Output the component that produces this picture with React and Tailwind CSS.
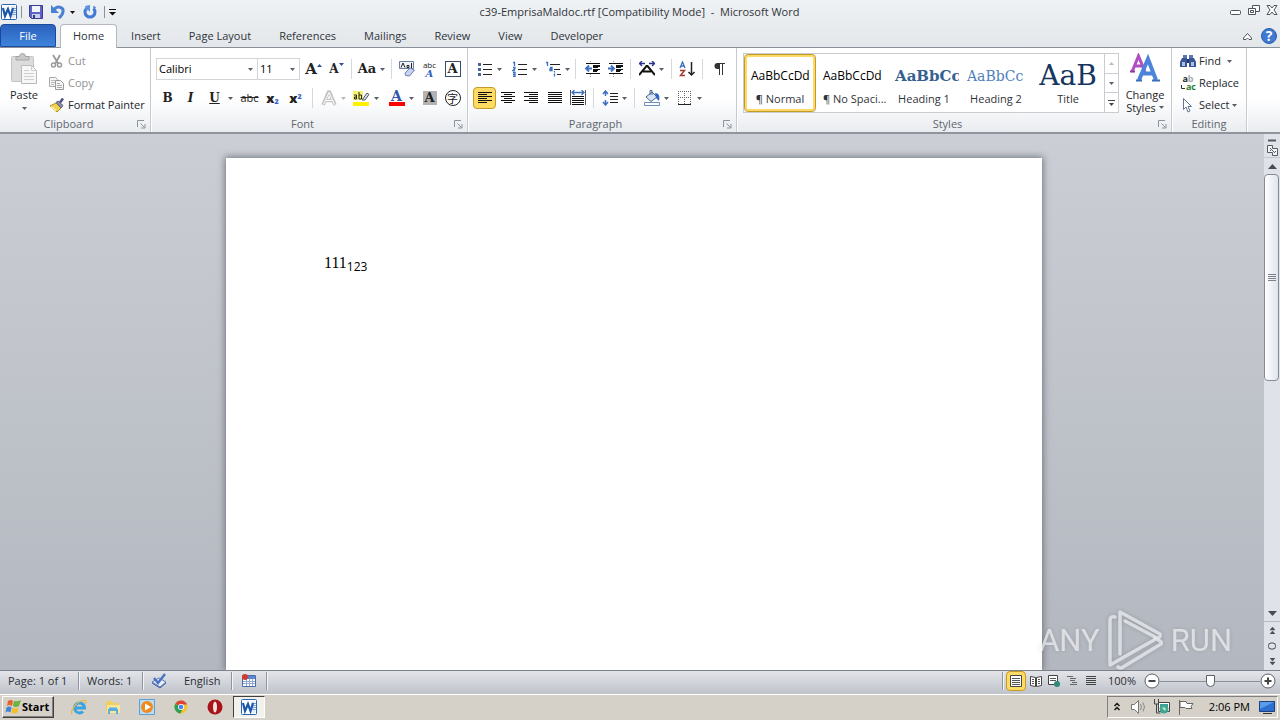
import React, { useState } from 'react'
import clsx from 'clsx'

const TABS = ['Home', 'Insert', 'Page Layout', 'References', 'Mailings', 'Review', 'View', 'Developer']

const STYLES = [
    { name: '¶ Normal', sample: 'AaBbCcDd', look: 'font-["Open_Sans",sans-serif] text-xs text-black' },
    { name: '¶ No Spaci...', sample: 'AaBbCcDd', look: 'font-["Open_Sans",sans-serif] text-xs text-black' },
    { name: 'Heading 1', sample: 'AaBbCc', look: 'font-["DejaVu_Serif",serif] text-[15px] font-bold text-[#365f91]' },
    { name: 'Heading 2', sample: 'AaBbCc', look: 'font-["DejaVu_Serif",serif] text-[14px] text-[#4f81bd]' },
    { name: 'Title', sample: 'AaB', look: 'justify-center font-["DejaVu_Serif",serif] text-[28px] text-[#17365d]' },
]

const Svg = ({ w = 16, h = 16, className, children }) => (
    <svg width={w} height={h} viewBox={`0 0 ${w} ${h}`} fill="none" aria-hidden="true" className={clsx('shrink-0', className)}>
        {children}
    </svg>
)

const Caret = ({ light }) => (
    <Svg w={5} h={3}><path d="M0 0h5L2.500 3z" fill={light ? '#b5b9be' : '#5b6068'} /></Svg>
)

const Tool = ({ label, width = 'w-[23px]', active, caret, light, children }) => (
    <button
        type="button"
        aria-label={label}
        aria-pressed={active}
        className={clsx(
            'flex h-[22px] shrink-0 items-center justify-center rounded-sm border',
            width,
            caret ? 'gap-1' : '',
            active ? 'border-[#c29b29] bg-[#fedb62]' : 'border-transparent hover:border-[#f1c43f] hover:bg-[#fdeeb3]'
        )}
    >
        {children}
        {caret && <Caret light={light} />}
    </button>
)

const Divider = ({ className = 'mx-[3px]' }) => <span className={clsx('h-5 w-px shrink-0 bg-[#d5d8dc]', className)} />

const QuickDivider = ({ className }) => <span className={clsx('h-3 w-px shrink-0 bg-[#8d9299]', className)} />

const Group = ({ name, launcher = true, width, children }) => (
    <section aria-label={name} className={clsx('flex shrink-0 flex-col border-r border-[#c6cad0] shadow-[1px_0_0_#fff]', width)}>
        <div className="flex flex-1 px-1">{children}</div>
        <div className="flex h-4 items-center text-[#60666f]">
            <span className="flex-1 text-center">{name}</span>
            {launcher && (
                <button type="button" aria-label={`${name} options`} className="mr-1 flex">
                    <Svg w={9} h={9}>
                        <path d="M.5 7V.5H7M3.500 3.500l4 4M8 4v4H4" stroke="#8d939b" />
                    </Svg>
                </button>
            )}
        </div>
    </section>
)

/* ---------- icons ---------- */

const WordIcon = () => (
    <Svg>
        <rect x=".5" y=".5" width="15" height="15" rx="1" fill="#fff" stroke="#2a62b4" />
        <path d="M10 2h4v12h-4z" fill="#dfe9f7" />
        <path d="M11 4.500h4M11 6.500h4M11 8.500h4M11 10.500h4" stroke="#7ea3d6" />
        <path d="M2 4l2 8L7 5l2.500 7L12 4" stroke="#1c56ab" strokeWidth="2.200" />
    </Svg>
)

const SaveIcon = () => (
    <Svg>
        <path d="M1.500 1.500h13v13h-11l-2-2z" fill="#5f63c4" stroke="#3b3d93" />
        <path d="M4 2h8v6H4z" fill="#f3f5fd" />
        <path d="M4 10h8v4H4z" fill="#c9cdee" />
        <path d="M5 11h2v3H5z" fill="#35378a" />
    </Svg>
)

const UndoIcon = () => (
    <Svg>
        <path d="M4 6c3-5 10-3 9 2-.4 3-2 4-4 6" stroke="#4a80d4" strokeWidth="3" />
        <path d="M1 1v8h8z" fill="#4a80d4" />
    </Svg>
)

const RedoIcon = () => (
    <Svg>
        <path d="M4.500 4.500a5 5 0 1 0 7 0" stroke="#3f7ad6" strokeWidth="3" />
        <path d="M8 1v7l-2-2-2 1-1-5z" fill="#5c92e2" />
        <path d="M11 2l3 1-2 3z" fill="#3f7ad6" />
    </Svg>
)

const PasteIcon = () => (
    <Svg w={28} h={32}>
        <rect x="1.500" y="3.500" width="22" height="25" rx="1" fill="#dcdcdc" stroke="#c3c3c3" />
        <path d="M6 7V3.500h3.500a3 3 0 0 1 6 0H19V7z" fill="#c9c9c9" stroke="#a5a5a5" />
        <path d="M11.500 12.500h10l5 5v13h-15z" fill="#f7f7f7" stroke="#b9b9b9" />
        <path d="M21.500 12.500v5h5M14 17.500h5M14 20.500h10M14 23.500h10M14 26.500h10" stroke="#cfcfcf" />
    </Svg>
)

const CutIcon = () => (
    <Svg>
        <path d="M4 2l5.500 9M11 2L6 11" stroke="#9a9a9a" strokeWidth="1.800" />
        <circle cx="4.500" cy="12" r="2" stroke="#9a9a9a" strokeWidth="1.500" />
        <circle cx="10.500" cy="12" r="2" stroke="#9a9a9a" strokeWidth="1.500" />
    </Svg>
)

const CopyIcon = () => (
    <Svg>
        <path d="M.5 2.500h6l2 2v7h-8z" fill="#f5f5f5" stroke="#a9a9a9" />
        <path d="M2 5.500h4M2 7.500h4M2 9.500h3" stroke="#bbb" />
        <path d="M6.500 5.500h5l3 3v6h-8z" fill="#f5f5f5" stroke="#999" />
        <path d="M8 8.500h3M8 10.500h5M8 12.500h5" stroke="#aaa" />
    </Svg>
)

const PainterIcon = () => (
    <Svg>
        <path d="M1 9l6-3 5 5-4 4z" fill="#f3d24b" stroke="#b18f1d" />
        <path d="M2 9.500l5 4" stroke="#fff2a8" strokeWidth="1.500" />
        <path d="M7 5.500L9 4l5 4.500-2 2.500z" fill="#8a8ea6" stroke="#5d6077" />
        <path d="M11 5.500L14 1.500" stroke="#4d4f86" strokeWidth="2.500" />
    </Svg>
)

const ALIGN_PATHS = {
    left: 'M1 2.500h14M1 4.500h9M1 6.500h14M1 8.500h9M1 10.500h14M1 12.500h9',
    center: 'M1 2.500h14M4 4.500h8M1 6.500h14M4 8.500h8M1 10.500h14M4 12.500h8',
    right: 'M1 2.500h14M6 4.500h9M1 6.500h14M6 8.500h9M1 10.500h14M6 12.500h9',
    full: 'M1 2.500h14M1 4.500h14M1 6.500h14M1 8.500h14M1 10.500h14M1 12.500h14',
}

const AlignIcon = ({ kind }) => <Svg><path d={ALIGN_PATHS[kind]} stroke="#111" /></Svg>

const DistributeIcon = () => (
    <Svg>
        <path d="M.5 0v15M15.500 0v15" stroke="#555" />
        <path d="M2 2.500h12M4.500 0L2 2.500 4.500 5M11.500 0L14 2.500 11.500 5" stroke="#3c6fc0" strokeWidth="1.300" />
        <path d="M2 6.500h12M2 8.500h12M2 10.500h12M2 12.500h12M2 14.500h12" stroke="#111" />
    </Svg>
)

const BulletsIcon = () => (
    <Svg>
        <path d="M1 2h3v3H1zM1 7h3v3H1zM1 12h3v3H1z" fill="#4a6595" />
        <path d="M6 3.500h9M6 8.500h9M6 13.500h9" stroke="#222" />
    </Svg>
)

const NumberingIcon = () => (
    <Svg>
        <path d="M1 1.500h1.500V5M1 6.500h2v1l-2 2h2M1 11.500h2v4H1M1 13.500h2" stroke="#3c6fc0" strokeWidth="1.300" />
        <path d="M6 3.500h9M6 8.500h9M6 13.500h9" stroke="#222" />
    </Svg>
)

const MultilevelIcon = () => (
    <Svg>
        <path d="M1 1.500h1.500V5M5 6.500h2v3H5v-1.500h2M9.500 10v1.500M9.500 12.500v3" stroke="#3c6fc0" strokeWidth="1.300" />
        <path d="M5 3.500h10M9 8.500h6M12 13.500h4" stroke="#222" />
    </Svg>
)

const IndentIcon = ({ out }) => (
    <Svg>
        <path d="M1 2.500h14M8 4.500h7M8 6.500h5M8 8.500h7M8 10.500h4M1 12.500h14" stroke="#111" />
        <path d="M8 5.500h7M8 9.500h5" stroke="#111" />
        <path d={out ? 'M7 7.500H1M4 4.500l-3 3 3 3' : 'M0 7.500h6M3 4.500l3 3-3 3'} stroke="#3c6fc0" strokeWidth="1.800" />
        <path d="M5.500 0v2M5.500 13v3" stroke="#999" strokeDasharray="1 1" />
    </Svg>
)

const ScaleIcon = () => (
    <Svg>
        <path d="M0 14L7.500 5h1L16 14M4 10.500h8" stroke="#111" strokeWidth="2" />
        <path d="M0 2.500h6M10 2.500h6M3 0L.5 2.500 3 5M13 0l2.500 2.500L13 5" stroke="#2b2f8e" strokeWidth="1.300" />
    </Svg>
)

const SortIcon = () => (
    <Svg>
        <path d="M1 7l2.500-6L6 7M2 5h3" stroke="#3c6fc0" strokeWidth="1.300" />
        <path d="M1 9.500h4.500l-4 5H6" stroke="#a63a2b" strokeWidth="1.500" />
        <path d="M12.500 1v13M9.500 11l3 3 3-3" stroke="#222" strokeWidth="1.500" />
    </Svg>
)

const PilcrowIcon = () => (
    <Svg>
        <path d="M6 2.500h8M8.500 2v12M11.500 2v12" stroke="#333" />
        <path d="M8.500 2H6.500a3 3 0 0 0 0 6h2z" fill="#333" />
    </Svg>
)

const SpacingIcon = () => (
    <Svg>
        <path d="M3.500 1v5M3.500 10v5M1 4l2.500-3L6 4M1 12l2.500 3L6 12" stroke="#3c6fc0" strokeWidth="1.500" />
        <path d="M8 3.500h8M8 6.500h8M8 9.500h8M8 12.500h8" stroke="#222" />
    </Svg>
)

const BucketIcon = () => (
    <Svg>
        <path d="M2 7l6-5 5 5-6 4.500z" fill="#d9e5f5" stroke="#48688f" />
        <path d="M6 5V.5h2V5" stroke="#48688f" />
        <path d="M11 3c4 0 5 3 4 8l-3-3z" fill="#2f66c4" />
        <path d="M.5 12.500h15v3H.5z" fill="#fff" stroke="#6c8bb5" />
    </Svg>
)

const BorderIcon = () => (
    <Svg>
        <path d="M1.500 1v13M7.500 1v13M13.500 1v13M1 1.500h13M1 7.500h13" stroke="#666" strokeDasharray="1 1" />
        <path d="M1 14.500h13" stroke="#222" />
    </Svg>
)

const EraserIcon = () => (
    <Svg>
        <path d="M.5.5h14v7H.5z" fill="#eef3fb" stroke="#6a7f9e" />
        <path d="M2 6.500L4 2l2 4.500M8 6.500V4.500h2v2H8M12.500 2v5" stroke="#222" />
        <path d="M6 12l5-5 4.500 2-5 6-4-.5z" fill="#c7d3ee" stroke="#6b7fb5" />
    </Svg>
)

const HighlightIcon = () => (
    <Svg w={17}>
        <path d="M0 1h10v9H0z" fill="#f7f36a" />
        <path d="M1 5h2.500v4H1.500V7h2M6 2v7h2.500V5H6" stroke="#222" />
        <path d="M9 10l5-7 2 1.500-4 5.500z" fill="#d6dbe4" stroke="#4e5a70" />
        <path d="M0 12h16v4H0z" fill="#ffef00" />
    </Svg>
)

const ChangeStylesIcon = () => (
    <Svg w={30} h={30}>
        <path d="M2 19L8.500 3 15 19M4.500 13h8" stroke="#b04fc0" strokeWidth="3" />
        <path d="M0 18.500h5" stroke="#8d3aa0" strokeWidth="2" />
        <path d="M9 27L18 6l8 21M11.500 20.500h12" stroke="#4b84d8" strokeWidth="4" />
        <path d="M6 27.500h6M22 27.500h8" stroke="#3a6cbd" strokeWidth="2" />
    </Svg>
)

const FindIcon = () => (
    <Svg>
        <path d="M3 2h4v3H3zM9 2h4v3H9z" fill="#5b78b4" />
        <path d="M2 5h5v9H0V9zM9 5h5l2 4v5H9z" fill="#3a5596" />
        <path d="M7 6h2v4H7z" fill="#20386f" />
        <path d="M2 9h3v4H2zM11 9h3v4h-3z" fill="#a9bfe6" />
    </Svg>
)

const ReplaceIcon = () => (
    <span className="flex w-4 shrink-0 flex-col text-[9px] leading-[8px] font-bold">
        <span>a<span className="text-[#aaa]">b</span></span>
        <span className="flex items-center justify-end text-[#2d7d32]">
            <Svg w={5} h={5}><path d="M.5 0v3.500H4" stroke="#333" /></Svg>
            ac
        </span>
    </span>
)

const SelectIcon = () => (
    <Svg>
        <path d="M3.500 1.500v11l2.500-2.500 2 5 2-1-2-4.500h3.500z" fill="#fff" stroke="#64748f" />
    </Svg>
)

const EditRow = ({ icon, muted, caret, children }) => (
    <button type="button" className={clsx('flex h-[22px] items-center gap-[3px] whitespace-nowrap', muted ? 'text-[#929292]' : 'text-[#23272c]')}>
        {icon}
        {children}
        {caret && <Caret />}
    </button>
)

const Combo = ({ label, value, width }) => {
    const [text, setText] = useState(value)
    return (
        <div className={clsx('flex h-[22px] items-center border border-[#d2d5d9] bg-white pr-1', width)}>
            <input
                aria-label={label}
                value={text}
                onChange={(e) => setText(e.target.value)}
                className="min-w-0 flex-1 pl-0.5 text-black outline-none"
            />
            <button type="button" aria-label={`${label} list`} className="flex"><Caret /></button>
        </div>
    )
}

/* ---------- window parts ---------- */

const TitleBar = () => (
    <header className="flex h-6 shrink-0 items-center pr-0.5 pl-px">
        <div className="flex flex-1 items-center">
            <button type="button" aria-label="Word" className="flex"><WordIcon /></button>
            <QuickDivider className="mx-1" />
            <button type="button" aria-label="Save" className="ml-0.5 flex"><SaveIcon /></button>
            <button type="button" aria-label="Undo" className="ml-1.5 flex items-center gap-1">
                <UndoIcon />
                <Svg w={5} h={3}><path d="M0 0h5L2.500 3z" fill="#111" /></Svg>
            </button>
            <button type="button" aria-label="Repeat" className="ml-[7px] flex"><RedoIcon /></button>
            <QuickDivider className="mr-1 ml-1.5" />
            <button type="button" aria-label="Customize toolbar" className="flex">
                <Svg w={7} h={7}><path d="M0 .5h7" stroke="#111" /><path d="M0 3h7L3.500 6.500z" fill="#111" /></Svg>
            </button>
        </div>
        <h1 className="whitespace-pre text-[#2f343a]">c39-EmprisaMaldoc.rtf [Compatibility Mode]  -  Microsoft Word</h1>
        <div className="flex flex-1 items-center justify-end gap-1.5 pb-1">
            <button type="button" aria-label="Minimize">
                <Svg w={12} h={12}><rect x=".5" y="6.500" width="10" height="4" rx="1" fill="#fff" stroke="#4f555d" /></Svg>
            </button>
            <button type="button" aria-label="Restore">
                <Svg w={12} h={12}>
                    <path d="M4.500 1.500h7v6h-7z" fill="#fff" stroke="#4f555d" />
                    <path d="M.5 4.500h7v6h-7z" fill="#fff" stroke="#4f555d" />
                    <path d="M2.500 6.500h3v2h-3z" stroke="#4f555d" />
                </Svg>
            </button>
            <button type="button" aria-label="Close">
                <Svg w={12} h={12}>
                    <path d="M1 1.500h3l2 2.500 2-2.500h3L8 6l3 4.500H8L6 8l-2 2.500H1L4 6z" fill="#fff" stroke="#4f555d" />
                </Svg>
            </button>
        </div>
    </header>
)

const TabBar = () => {
    const [tab, setTab] = useState('Home')
    return (
        <nav className="flex h-6 shrink-0 items-stretch border-b border-[#8a9098] pr-[3px]">
            <button type="button" className="mr-1 w-14 rounded-t border border-[#1b4a9c] bg-linear-to-b from-[#2c62bd] to-[#3e83da] text-white">File</button>
            {TABS.map((name) => (
                <button
                    key={name}
                    type="button"
                    onClick={() => setTab(name)}
                    className={clsx(
                        'mb-[-1px] rounded-t border border-b-0 pb-0.5 whitespace-nowrap text-[#2f343a]',
                        tab === name ? 'border-[#b4b9c0] bg-white px-3' : 'border-transparent px-[13px]'
                    )}
                >
                    {name}
                </button>
            ))}
            <div className="flex flex-1 items-center justify-end gap-2">
                <button type="button" aria-label="Minimize ribbon">
                    <Svg w={11} h={10}><path d="M1.500 7L5.500 2.500 9.500 7v1.500H7L5.500 7 4 8.500H1.500z" fill="#fff" stroke="#4f555d" /></Svg>
                </button>
                <button type="button" aria-label="Help" className="flex size-4 items-center justify-center rounded-full border border-[#2a5db0] bg-[#3f7ad0] text-sm font-bold text-white">?</button>
            </div>
        </nav>
    )
}

const FontGroup = () => (
    <Group name="Font" width="w-[317px]">
        <div className="flex flex-col gap-[7px] pt-2.5 pl-px font-['DejaVu_Serif',serif] text-[#222]">
            <div className="flex items-center">
                <div className="flex font-['Open_Sans',sans-serif]">
                    <Combo label="Font name" value="Calibri" width="w-[102px]" />
                    <Combo label="Font size" value="11" width="-ml-px w-[43px]" />
                </div>
                <Tool label="Grow font" width="ml-0.5 w-[23px]">
                    <b className="text-[15px]">A</b>
                    <Svg w={5} h={10}><path d="M0 3h5L2.500 0z" fill="#2f4f96" /></Svg>
                </Tool>
                <Tool label="Shrink font">
                    <b className="text-xs">A</b>
                    <Svg w={5} h={12}><path d="M0 0h5L2.500 3z" fill="#2f4f96" /></Svg>
                </Tool>
                <Divider />
                <Tool label="Change case" width="w-[33px]" caret><b className="text-[13px]">Aa</b></Tool>
                <Divider />
                <Tool label="Clear formatting"><EraserIcon /></Tool>
                <Tool label="Phonetic guide">
                    <span className="flex flex-col items-center text-[8px] leading-[9px] font-bold">
                        <span className="font-['Open_Sans',sans-serif] font-normal">abc</span>
                        <i className="text-[10px] text-[#2f5fc0]">A</i>
                    </span>
                </Tool>
                <Tool label="Character border">
                    <b className="flex size-4 items-center justify-center border border-[#3b4c66] text-[13px]">A</b>
                </Tool>
            </div>
            <div className="flex items-center">
                <Tool label="Bold"><b className="text-xs">B</b></Tool>
                <Tool label="Italic"><b className="text-xs italic">I</b></Tool>
                <Tool label="Underline" width="w-[36px]" caret><b className="pr-1 pl-0.5 text-xs underline">U</b></Tool>
                <Tool label="Strikethrough"><span className="font-['Open_Sans',sans-serif] text-[11px] line-through">abc</span></Tool>
                <Tool label="Subscript">
                    <span className="font-['Open_Sans',sans-serif] text-[13px] leading-none font-extrabold">x<sub className="text-[7px] text-[#2f5fc0]">2</sub></span>
                </Tool>
                <Tool label="Superscript">
                    <span className="font-['Open_Sans',sans-serif] text-[13px] leading-none font-extrabold">x<sup className="text-[7px] text-[#2f5fc0]">2</sup></span>
                </Tool>
                <Divider className="mx-[5px]" />
                <Tool label="Text effects" width="w-[30px]" caret light>
                    <Svg><path d="M2 15L7.500 2h1L14 15M4.500 10.500h7" stroke="#c4c4c4" strokeWidth="3.500" /><path d="M2.500 14.500L8 2.500l5.500 12M5 10.500h6" stroke="#fff" /></Svg>
                </Tool>
                <Tool label="Highlight" width="w-[36px]" caret><HighlightIcon /></Tool>
                <Tool label="Font color" width="w-[34px]" caret>
                    <span className="flex w-4 flex-col items-center border-b-4 border-[#f00] text-[14px] leading-[12px] font-bold text-[#3458a4]">A</span>
                </Tool>
                <Tool label="Character shading">
                    <b className="flex h-3.5 w-3.5 items-center justify-center bg-[#b3b3b3] text-[13px]">A</b>
                </Tool>
                <Tool label="Enclose characters">
                    <span className="flex size-4 items-center justify-center rounded-full border border-[#222] font-['Noto_Sans_CJK_SC',sans-serif] text-[11px] leading-none">字</span>
                </Tool>
            </div>
        </div>
    </Group>
)

const ParagraphGroup = () => (
    <Group name="Paragraph" width="w-[269px]">
        <div className="flex flex-col gap-[7px] pt-2.5">
            <div className="flex items-center">
                <Tool label="Bullets" width="w-[35px]" caret><BulletsIcon /></Tool>
                <Tool label="Numbering" width="w-[35px]" caret><NumberingIcon /></Tool>
                <Tool label="Multilevel list" width="w-[30px]" caret><MultilevelIcon /></Tool>
                <Divider className="mr-[5px] ml-[3px]" />
                <Tool label="Decrease indent"><IndentIcon out /></Tool>
                <Tool label="Increase indent"><IndentIcon /></Tool>
                <Divider />
                <Tool label="Asian layout" width="w-[34px]" caret><ScaleIcon /></Tool>
                <Divider />
                <Tool label="Sort"><SortIcon /></Tool>
                <Divider className="mx-1" />
                <Tool label="Show marks"><PilcrowIcon /></Tool>
            </div>
            <div className="flex items-center">
                <Tool label="Align left" width="ml-px w-[23px]" active><AlignIcon kind="left" /></Tool>
                <Tool label="Center"><AlignIcon kind="center" /></Tool>
                <Tool label="Align right" width="w-6"><AlignIcon kind="right" /></Tool>
                <Tool label="Justify"><AlignIcon kind="full" /></Tool>
                <Tool label="Distribute" width="w-6"><DistributeIcon /></Tool>
                <Divider />
                <Tool label="Line spacing" width="w-[34px]" caret><SpacingIcon /></Tool>
                <Divider className="mr-1 ml-[3px]" />
                <Tool label="Shading" width="w-[34px]" caret><BucketIcon /></Tool>
                <Tool label="Borders" width="w-[33px]" caret><BorderIcon /></Tool>
            </div>
        </div>
    </Group>
)

const StylesGroup = () => {
    const [current, setCurrent] = useState('¶ Normal')
    return (
        <Group name="Styles" width="w-[435px]">
            <div className="ml-0.5 flex pt-[5px]">
                <div className="flex h-[60px] border border-[#c9cdd2] bg-white">
                    {STYLES.map((s) => (
                        <button
                            key={s.name}
                            type="button"
                            onClick={() => setCurrent(s.name)}
                            className={clsx(
                                'flex h-[58px] w-[72px] flex-col justify-end overflow-hidden rounded-sm border px-1.5 pb-1 text-[#2f343a]',
                                current === s.name ? 'border-[#c29b29] shadow-[inset_0_0_0_2px_#ffd966]' : 'border-transparent'
                            )}
                        >
                            <span className={clsx('flex h-7 w-full items-center leading-none', s.look)}>{s.sample}</span>
                            <span className="w-full text-center leading-[17px] whitespace-nowrap">{s.name}</span>
                        </button>
                    ))}
                    <div className="flex w-3.5 flex-col divide-y divide-[#c9cdd2] border-l border-[#c9cdd2]">
                        <button type="button" aria-label="Previous styles" className="flex flex-1 items-center justify-center">
                            <Svg w={5} h={3}><path d="M0 3h5L2.500 0z" fill="#b5b9be" /></Svg>
                        </button>
                        <button type="button" aria-label="Next styles" className="flex flex-1 items-center justify-center"><Caret /></button>
                        <button type="button" aria-label="More styles" className="flex flex-1 items-center justify-center">
                            <Svg w={7} h={6}><path d="M0 .5h7" stroke="#444" /><path d="M1 3h5L3.500 6z" fill="#444" /></Svg>
                        </button>
                    </div>
                </div>
                <button type="button" className="ml-0.5 flex w-12 flex-col items-center text-[#23272c]">
                    <ChangeStylesIcon />
                    <span className="mt-[5px] leading-[13px]">Change</span>
                    <span className="flex items-center gap-[3px] leading-[13px]">Styles <Caret /></span>
                </button>
            </div>
        </Group>
    )
}

const Ribbon = () => (
    <div className="flex h-[86px] shrink-0 border-b-2 border-[#8f949d] bg-linear-to-b from-white from-60% to-[#e9ecf0]">
        <Group name="Clipboard" width="w-[151px]">
            <button type="button" className="flex w-10 flex-col items-center pt-[5px] text-[#23272c]">
                <PasteIcon />
                <span className="pt-0.5 leading-4">Paste</span>
                <span className="pt-1"><Caret /></span>
            </button>
            <div className="flex flex-col pt-0.5 pl-[5px]">
                <EditRow icon={<CutIcon />} muted>Cut</EditRow>
                <EditRow icon={<CopyIcon />} muted>Copy</EditRow>
                <EditRow icon={<PainterIcon />}>Format Painter</EditRow>
            </div>
        </Group>
        <FontGroup />
        <ParagraphGroup />
        <StylesGroup />
        <Group name="Editing" launcher={false} width="w-[75px]">
            <div className="flex flex-col pt-0.5 pl-1">
                <EditRow icon={<FindIcon />} caret>Find&nbsp;</EditRow>
                <EditRow icon={<ReplaceIcon />}>Replace</EditRow>
                <EditRow icon={<SelectIcon />} caret>Select</EditRow>
            </div>
        </Group>
    </div>
)

const ScrollBar = () => (
    <div className="flex w-4 shrink-0 flex-col items-center bg-[#dfe3e9] pt-[5px]">
        <Svg w={8} h={3}><path d="M0 1.500h8" stroke="#565b63" strokeWidth="2" /></Svg>
        <button type="button" aria-label="View ruler" className="mt-0.5">
            <Svg w={13} h={13}>
                <path d="M1.500 1.500h5v3h5v7h-5v-3h-5z" fill="#f5f6f8" stroke="#565b63" />
                <path d="M4 4l5 5M4 7l2-2M8 9l2-2" stroke="#565b63" />
            </Svg>
        </button>
        <button type="button" aria-label="Scroll up" className="flex h-[17px] w-full items-center justify-center border-t border-[#c3c8cf]">
            <Svg w={9} h={5}><path d="M0 5h9L4.500 0z" fill="#474c54" /></Svg>
        </button>
        <div className="w-full flex-1">
            <div className="flex h-[48%] w-[15px] items-center justify-center rounded-sm border border-[#858b95] bg-linear-to-r from-white to-[#dfe4ec]">
                <Svg w={8} h={8}><path d="M0 .5h8M0 2.500h8M0 4.500h8M0 6.500h8" stroke="#7c828c" /></Svg>
            </div>
        </div>
        <button type="button" aria-label="Scroll down" className="flex h-4 w-full items-center justify-center border-b border-[#b5bac2]">
            <Svg w={9} h={5}><path d="M0 0h9L4.500 5z" fill="#474c54" /></Svg>
        </button>
        <button type="button" aria-label="Previous page" className="flex h-4 items-center">
            <Svg w={5} h={8}><path d="M0 4h5L2.500 1zM0 8h5L2.500 5z" fill="#474c54" stroke="#474c54" strokeWidth=".5" /></Svg>
        </button>
        <button type="button" aria-label="Browse object" className="flex h-4 items-center">
            <Svg w={8} h={8}><rect x=".5" y="1" width="7" height="6" rx="2.500" stroke="#474c54" /></Svg>
        </button>
        <button type="button" aria-label="Next page" className="flex h-4 items-center">
            <Svg w={5} h={8}><path d="M0 0h5L2.500 3zM0 4h5L2.500 7z" fill="#474c54" stroke="#474c54" strokeWidth=".5" /></Svg>
        </button>
    </div>
)

const Watermark = () => (
    <div className="pointer-events-none absolute right-12 bottom-0 flex h-[60px] items-center gap-2 font-['Roboto',sans-serif] text-[31px] leading-none text-white/60 drop-shadow-[0_0_2px_#00000033]">
        <span>ANY</span>
        <Svg w={55} h={60}>
            <g stroke="#e3e6ea" strokeOpacity=".85" strokeWidth="3.500" strokeLinejoin="round" strokeLinecap="round">
                <path d="M7 7q-5-1-5 3v45l44-25" />
                <path d="M12 44V2l40 22q1 4-3 4L17 11" />
                <path d="M10 57q3 2 5 0l38-23q1-2-1-3l-5-3" />
            </g>
        </Svg>
        <span>RUN</span>
    </div>
)

const Document = () => (
    <main className="relative flex min-h-0 flex-1 bg-linear-to-b from-[#cbced4] to-[#b3b7bf]">
        <div className="flex min-w-0 flex-1 justify-center overflow-hidden pt-6 pl-1">
            <article className="w-[816px] bg-white px-[98px] pt-[95px] text-black shadow-[0_0_7px_1px_#6f747d]">
                <p className="font-['Liberation_Serif',serif] text-base leading-5">
                    111<sub className="font-['Open_Sans',sans-serif] text-xs">123</sub>
                </p>
            </article>
        </div>
        <ScrollBar />
        <Watermark />
    </main>
)

const StatusDivider = () => <span className="h-[18px] w-px bg-[#8e939c] shadow-[1px_0_0_#f4f5f7]" />

const StatusBar = () => {
    const [zoom, setZoom] = useState(100)
    return (
        <footer className="flex h-6 shrink-0 items-center border-t border-[#7d828b] bg-linear-to-b from-[#e3e5e9] to-[#bfc3ca] pb-[3px] text-[#2a2e34]">
            <button type="button" className="w-[78px] pl-2 text-left whitespace-nowrap">Page: 1 of 1</button>
            <StatusDivider />
            <button type="button" className="w-[63px] pl-2 text-left whitespace-nowrap">Words: 1</button>
            <StatusDivider />
            <button type="button" aria-label="Proofing" className="flex w-8 justify-center">
                <Svg>
                    <path d="M1 9l7-4 7 4-6 5z" fill="#e9eefb" stroke="#5a76b8" />
                    <path d="M1 10l8 5 6-5" stroke="#3f5da5" />
                    <path d="M3 5l4 5 7-9" stroke="#4d73c4" strokeWidth="2.500" />
                </Svg>
            </button>
            <button type="button" className="w-14 pl-[9px] text-left">English</button>
            <StatusDivider />
            <button type="button" aria-label="Macro" className="flex w-[34px] justify-center">
                <Svg>
                    <path d="M1.500 2.500h13v11h-13z" fill="#fff" stroke="#4a6ea9" />
                    <path d="M2 3h12v3H2z" fill="#5b86cf" />
                    <path d="M2 8.500h12M2 10.500h12M5.500 6v7M8.500 6v7M11.500 6v7" stroke="#8fa9d3" />
                    <circle cx="4" cy="4" r="3" fill="#d23b30" />
                </Svg>
            </button>
            <StatusDivider />
            <div className="flex-1" />
            <StatusDivider />
            <div className="ml-[3px] flex items-center gap-px">
                <button type="button" aria-label="Print layout" className="flex size-5 items-center justify-center rounded-sm border border-[#c29b29] bg-[#fedb62]">
                    <Svg w={12} h={12}><path d="M.5.5h11v11H.5z" fill="#fff" stroke="#444" /><path d="M2 3.500h8M2 5.500h8M2 7.500h8M2 9.500h8" stroke="#555" /></Svg>
                </button>
                <button type="button" aria-label="Reading" className="flex w-[17px] justify-center">
                    <Svg w={12} h={12}><path d="M.5 1.500l5 1v9l-5-1zM11.500 1.500l-5 1v9l5-1z" fill="#fff" stroke="#444" /><path d="M2 4.500h2M2 6.500h2M2 8.500h2M8 4.500h2M8 6.500h2M8 8.500h2" stroke="#555" /></Svg>
                </button>
                <button type="button" aria-label="Web layout" className="flex w-[17px] justify-center">
                    <Svg w={12} h={12}><path d="M.5.5h9v9h-9z" fill="#fff" stroke="#444" /><path d="M2 3.500h6M2 5.500h6" stroke="#555" /><circle cx="9" cy="9" r="3" fill="#2c8a78" /></Svg>
                </button>
                <button type="button" aria-label="Outline" className="flex w-[18px] justify-center">
                    <Svg w={12} h={12}><path d="M1 1.500h6M4 3.500h6M4 5.500h5M6 7.500h5M4 9.500h7" stroke="#666" /></Svg>
                </button>
                <button type="button" aria-label="Draft" className="flex w-[18px] justify-center">
                    <Svg w={12} h={12}><path d="M1 1.500h10M1 3.500h10M1 5.500h10M1 7.500h10M1 9.500h10" stroke="#444" /></Svg>
                </button>
            </div>
            <button type="button" className="ml-1 w-10 pr-2 text-right whitespace-nowrap">{zoom}%</button>
            <button type="button" aria-label="Zoom out" className="flex">
                <Svg><circle cx="8" cy="8" r="7" fill="#fff" stroke="#5a5f67" /><path d="M4.500 8h7" stroke="#444" strokeWidth="2" /></Svg>
            </button>
            <input
                type="range"
                aria-label="Zoom"
                min="0"
                max="200"
                value={zoom}
                onChange={(e) => setZoom(Number(e.target.value))}
                className="h-4 w-[100px] appearance-none bg-[linear-gradient(#8b9099,#8b9099)] bg-[length:100%_1px] bg-center bg-no-repeat [&::-webkit-slider-thumb]:h-3 [&::-webkit-slider-thumb]:w-[9px] [&::-webkit-slider-thumb]:appearance-none [&::-webkit-slider-thumb]:rounded-b-full [&::-webkit-slider-thumb]:border [&::-webkit-slider-thumb]:border-[#5a5f67] [&::-webkit-slider-thumb]:bg-white"
            />
            <button type="button" aria-label="Zoom in" className="mr-1 flex">
                <Svg><circle cx="8" cy="8" r="7" fill="#fff" stroke="#5a5f67" /><path d="M4.500 8h7M8 4.500v7" stroke="#444" strokeWidth="2" /></Svg>
            </button>
        </footer>
    )
}

const TaskBar = () => (
    <div className="flex h-[26px] shrink-0 items-center border-t border-white bg-[#d5d1c8] px-0.5 pb-0.5">
        <button type="button" className="flex h-[22px] w-[52px] items-center gap-px border border-t-white border-r-[#404040] border-b-[#404040] border-l-white pl-0.5 text-[11px] font-bold text-black shadow-[inset_-1px_-1px_0_#808080]">
            <Svg>
                <path d="M3 2q3-2 5 0L7 7q-3-2-5 0z" fill="#e8622a" />
                <path d="M9 2q3 1 7-1l-2 6q-3 2-6 0z" fill="#6cb33f" />
                <path d="M1.500 8.500q3-2 5 0l-1 5q-3-2-5 0z" fill="#3f84d8" />
                <path d="M7.500 8.500q3 2 6 0l-1 5q-3 2-6 0z" fill="#f6bd27" />
            </Svg>
            Start
        </button>
        <div className="ml-2 flex items-center">
            <button type="button" aria-label="Internet Explorer" className="flex w-[34px] justify-center">
                <Svg>
                    <path d="M3 9h10.500a5 5 0 1 0-1.500 3.500" stroke="#3aa3e3" strokeWidth="3" />
                    <path d="M1 15C-1 12 5 3 12 1.500c4-.5 3 2 2 3.500" stroke="#e9b83a" strokeWidth="1.200" />
                </Svg>
            </button>
            <button type="button" aria-label="Explorer" className="flex w-[34px] justify-center">
                <Svg>
                    <path d="M1 2h6l1 2h6v10H1z" fill="#f0cf62" />
                    <path d="M2 6h13v8H2z" fill="#f9e69a" />
                    <path d="M4 15v-4h8v4M4 9.500h8" stroke="#59aee0" strokeWidth="2" />
                </Svg>
            </button>
            <button type="button" aria-label="Media Player" className="flex w-[34px] justify-center">
                <Svg>
                    <path d="M.5.5h15v15H.5z" fill="#b9dcf3" stroke="#5aa0d6" />
                    <circle cx="8" cy="8" r="6" fill="#f08a1d" />
                    <path d="M6 4.500L12 8l-6 3.500z" fill="#fff" />
                </Svg>
            </button>
            <button type="button" aria-label="Chrome" className="flex w-[34px] justify-center">
                <Svg w={14} h={14}>
                    <circle cx="7" cy="7" r="6.500" fill="#f4c430" />
                    <path d="M7 7L1.300 3.800A6.500 6.500 0 0 1 13 4.500H7z" fill="#dc4437" />
                    <path d="M1.300 3.800A6.500 6.500 0 0 0 6.500 13.500L9 8 7 7z" fill="#2f9e4f" />
                    <circle cx="7" cy="7" r="3" fill="#fff" />
                    <circle cx="7" cy="7" r="2.300" fill="#4285f4" />
                </Svg>
            </button>
            <button type="button" aria-label="Opera" className="flex w-[34px] justify-center">
                <Svg>
                    <ellipse cx="8" cy="8" rx="7.500" ry="7.500" fill="#a81218" />
                    <ellipse cx="8" cy="8" rx="2" ry="5.500" fill="#efe3df" />
                </Svg>
            </button>
            <button type="button" aria-label="Word document" className="ml-px flex h-[22px] w-8 items-center justify-center border border-t-[#404040] border-r-white border-b-white border-l-[#404040] bg-[#f3f1ec]">
                <WordIcon />
            </button>
        </div>
        <div className="flex-1" />
        <div className="flex h-[22px] items-center border border-t-[#808080] border-r-white border-b-white border-l-[#808080] pr-0.5 pl-1.5 text-black">
            <Svg w={6} h={9}><path d="M.5 4L3 1.500 5.500 4M.5 8L3 5.500 5.500 8" stroke="#111" strokeWidth="1.500" /></Svg>
            <Svg w={17} className="ml-2.5">
                <path d="M1.500 5.500h3l4-4v13l-4-4h-3z" fill="#fff" stroke="#777" />
                <path d="M10.500 5q2 3 0 6M13 3.500q3 4.500 0 9" stroke="#888" />
            </Svg>
            <Svg className="ml-[7px]">
                <path d="M4.500 3.500h11v9h-11z" fill="#fff" stroke="#444" />
                <path d="M6 5h8v6H6z" fill="#3b9e94" />
                <path d="M.5 0v5h4V0M2.500 5v9h4" stroke="#444" />
                <circle cx="10" cy="10" r="4.500" fill="#41a594" />
                <path d="M8 9l2-1 2 2-1 2z" fill="#bfe3c4" />
            </Svg>
            <Svg className="ml-2">
                <path d="M1.500 1v15" stroke="#666" />
                <path d="M2 2.500h6l1 2h6l-2 3 1 2H8l-1-1H2z" fill="#fff" stroke="#666" />
            </Svg>
            <time className="mr-px ml-[15px] whitespace-nowrap">2:06 PM</time>
            <Svg className="ml-2">
                <path d="M.5 2.500h15v10H.5z" fill="#2d6fd0" stroke="#1c3f7e" />
                <path d="M1 3h14L1 10z" fill="#5b9bea" />
                <path d="M4 14.500h9" stroke="#333" />
            </Svg>
        </div>
    </div>
)

const App = () => (
    <div className="flex h-screen flex-col overflow-hidden bg-linear-to-b from-[#eff2f4] to-[#dde1e5] to-10% font-['Open_Sans','Noto_Sans',sans-serif] text-[11px] leading-4">
        <TitleBar />
        <TabBar />
        <Ribbon />
        <Document />
        <StatusBar />
        <TaskBar />
    </div>
)

export default App
